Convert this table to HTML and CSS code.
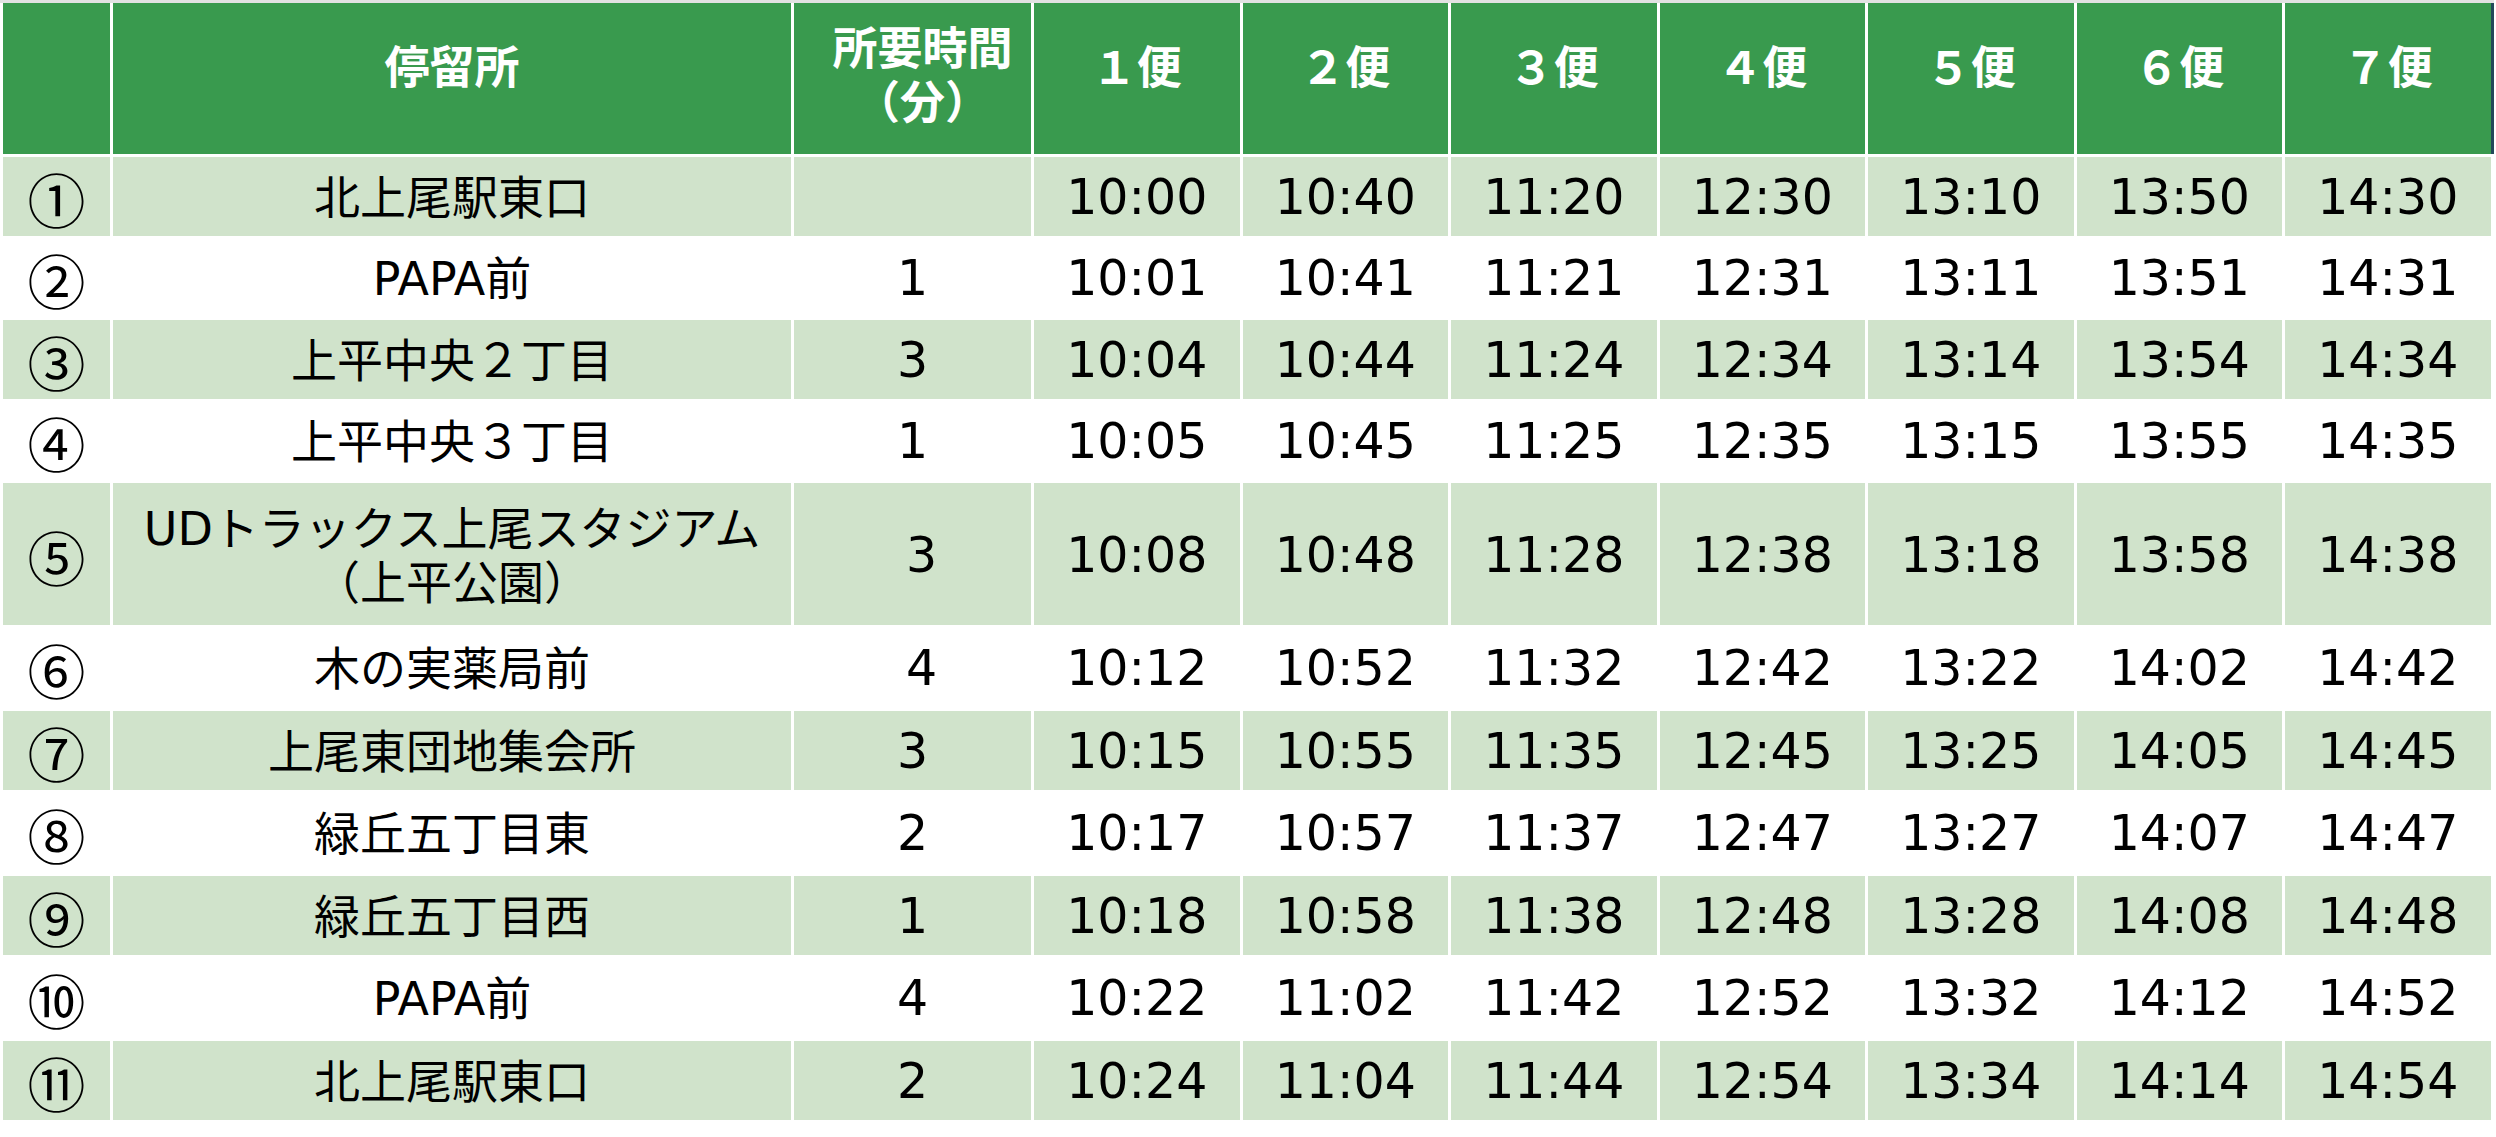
FILE: index.html
```html
<!DOCTYPE html>
<html lang="ja">
<head>
<meta charset="utf-8">
<title>時刻表</title>
<link rel="stylesheet" href="styles.css">
</head>
<body>
<table class="timetable">
  <colgroup>
    <col class="c-no">
    <col class="c-stop">
    <col class="c-min">
    <col class="c-trip"><col class="c-trip"><col class="c-trip"><col class="c-trip"><col class="c-trip"><col class="c-trip"><col class="c-trip">
  </colgroup>
  <thead>
    <tr class="head">
      <th></th>
      <th class="h1">停留所</th>
      <th class="h2"><span class="ln">所要時間</span><span class="ln">（分）</span></th>
      <th class="h1">１便</th>
      <th class="h1">２便</th>
      <th class="h1">３便</th>
      <th class="h1">４便</th>
      <th class="h1">５便</th>
      <th class="h1">６便</th>
      <th class="h1 last">７便</th>
    </tr>
  </thead>
  <tbody>
    <tr class="odd r-a"><td class="no">①</td><td class="stop">北上尾駅東口</td><td class="min"></td><td>10:00</td><td>10:40</td><td>11:20</td><td>12:30</td><td>13:10</td><td>13:50</td><td>14:30</td></tr>
    <tr class="even r-a"><td class="no">②</td><td class="stop">PAPA前</td><td class="min">1</td><td>10:01</td><td>10:41</td><td>11:21</td><td>12:31</td><td>13:11</td><td>13:51</td><td>14:31</td></tr>
    <tr class="odd r-a"><td class="no">③</td><td class="stop">上平中央２丁目</td><td class="min">3</td><td>10:04</td><td>10:44</td><td>11:24</td><td>12:34</td><td>13:14</td><td>13:54</td><td>14:34</td></tr>
    <tr class="even r-a"><td class="no">④</td><td class="stop">上平中央３丁目</td><td class="min">1</td><td>10:05</td><td>10:45</td><td>11:25</td><td>12:35</td><td>13:15</td><td>13:55</td><td>14:35</td></tr>
    <tr class="odd r-tall"><td class="no">⑤</td><td class="stop two"><span class="ln">UDトラックス上尾スタジアム</span><span class="ln">（上平公園）</span></td><td class="min shift">3</td><td>10:08</td><td>10:48</td><td>11:28</td><td>12:38</td><td>13:18</td><td>13:58</td><td>14:38</td></tr>
    <tr class="even r-b"><td class="no">⑥</td><td class="stop">木の実薬局前</td><td class="min shift">4</td><td>10:12</td><td>10:52</td><td>11:32</td><td>12:42</td><td>13:22</td><td>14:02</td><td>14:42</td></tr>
    <tr class="odd r-b"><td class="no">⑦</td><td class="stop">上尾東団地集会所</td><td class="min">3</td><td>10:15</td><td>10:55</td><td>11:35</td><td>12:45</td><td>13:25</td><td>14:05</td><td>14:45</td></tr>
    <tr class="even r-b"><td class="no">⑧</td><td class="stop">緑丘五丁目東</td><td class="min">2</td><td>10:17</td><td>10:57</td><td>11:37</td><td>12:47</td><td>13:27</td><td>14:07</td><td>14:47</td></tr>
    <tr class="odd r-b"><td class="no">⑨</td><td class="stop">緑丘五丁目西</td><td class="min">1</td><td>10:18</td><td>10:58</td><td>11:38</td><td>12:48</td><td>13:28</td><td>14:08</td><td>14:48</td></tr>
    <tr class="even r-b"><td class="no">⑩</td><td class="stop">PAPA前</td><td class="min">4</td><td>10:22</td><td>11:02</td><td>11:42</td><td>12:52</td><td>13:32</td><td>14:12</td><td>14:52</td></tr>
    <tr class="odd r-b"><td class="no">⑪</td><td class="stop">北上尾駅東口</td><td class="min">2</td><td>10:24</td><td>11:04</td><td>11:44</td><td>12:54</td><td>13:34</td><td>14:14</td><td>14:54</td></tr>
  </tbody>
</table>
</body>
</html>
```
FILE: styles.css
```css
html, body {
  margin: 0;
  padding: 0;
  background: #ffffff;
}

.timetable {
  border-collapse: separate;
  border-spacing: 3px;
  table-layout: fixed;
  width: 2493.5px;
  box-shadow: inset 0 3px 0 #e2e2e2;
  font-family: "DejaVu Sans", "Noto Sans CJK JP", sans-serif;
  color: #000000;
}

.c-no { width: 107px; }
.c-stop { width: 678px; }
.c-min { width: 237px; }
.c-trip { width: 205.5px; }

.head {
  height: 151px;
}

.head th {
  background: #399a4e;
  color: #ffffff;
  font-family: "Noto Sans CJK JP", sans-serif;
  font-weight: 700;
  font-size: 45px;
  line-height: 53px;
  vertical-align: top;
  text-align: center;
  padding: 0;
}

.head th.h1 {
  padding-top: 35px;
}

.head th.h2 {
  padding-top: 16px;
  padding-left: 20px;
  line-height: 54px;
}

.ln {
  display: block;
}

.head th.last {
  box-shadow: 3px 0 0 #22495a;
}

.r-a { height: 78.5px; }
.r-tall { height: 142px; }
.r-b { height: 79.5px; }

tbody td {
  padding: 3px 0 0 0;
  text-align: center;
  vertical-align: middle;
  font-size: 49px;
  line-height: 56px;
  white-space: nowrap;
}

.odd td {
  background: #d0e3cb;
}

.even td {
  background: #ffffff;
}

td.no {
  font-family: "Noto Sans CJK JP", sans-serif;
  font-size: 58px;
  line-height: 60px;
}

td.stop {
  font-size: 46px;
  line-height: 54px;
}

td.min.shift {
  padding-left: 18px;
}
```
